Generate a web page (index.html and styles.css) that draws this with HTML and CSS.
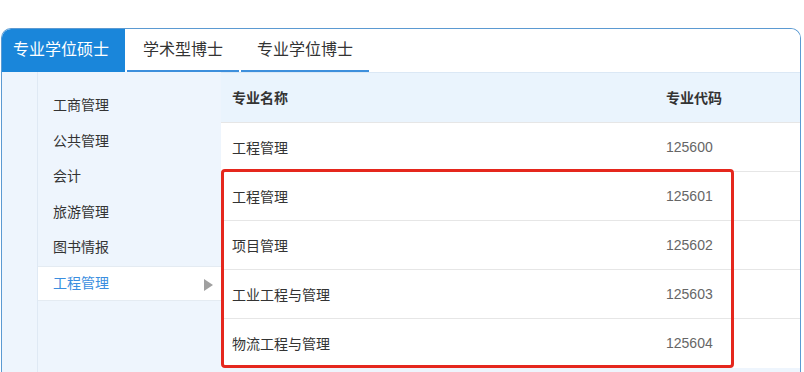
FILE: index.html
```html
<!DOCTYPE html>
<html lang="zh-CN">
<head>
  <meta charset="UTF-8">
  <title>专业目录</title>
  <link rel="stylesheet" href="styles.css">
</head>
<body>
  <div class="panel">
    <div class="tabs">
      <div class="tab active">专业学位硕士</div>
      <div class="tab">学术型博士</div>
      <div class="tab">专业学位博士</div>
    </div>
    <div class="panel-body">
      <div class="strip"></div>
      <ul class="menu">
        <li>工商管理</li>
        <li>公共管理</li>
        <li>会计</li>
        <li>旅游管理</li>
        <li>图书情报</li>
        <li class="current">工程管理<span class="arrow"></span></li>
      </ul>
      <div class="table-wrap">
        <table class="majors">
          <thead>
            <tr><th>专业名称</th><th class="code">专业代码</th></tr>
          </thead>
          <tbody>
            <tr><td>工程管理</td><td class="code">125600</td></tr>
            <tr><td>工程管理</td><td class="code">125601</td></tr>
            <tr><td>项目管理</td><td class="code">125602</td></tr>
            <tr><td>工业工程与管理</td><td class="code">125603</td></tr>
            <tr><td>物流工程与管理</td><td class="code">125604</td></tr>
          </tbody>
        </table>
        <!-- annotation box over the sub-majors -->
        <div class="highlight"></div>
      </div>
    </div>
  </div>
</body>
</html>
```

FILE: styles.css
```css
* {
  box-sizing: border-box;
  margin: 0;
  padding: 0;
}
body {
  font-family: "Liberation Sans", "Noto Sans CJK SC", sans-serif;
  background: #fff;
  color: #333;
  font-size: 14px;
}
.panel {
  margin: 28px 0 0 1px;
  width: 800px;
  height: 360px;
  border: 1px solid #5b9ad2;
  border-bottom: none;
  border-radius: 10px 10px 0 0;
  overflow: hidden;
}
.tabs {
  display: flex;
  gap: 2px;
  height: 43px;
  background: #fff;
}
.tab {
  padding: 0 16px;
  font-size: 16px;
  line-height: 41px;
  color: #333;
  border-bottom: 2px solid #3d8fdc;
}
.tab.active {
  padding: 0 16px 0 11px;
  background: #1a86da;
  color: #fff;
  border-bottom-color: #1a86da;
}
.panel-body {
  display: flex;
  height: 320px;
  background: #eef5fd;
}
.strip {
  width: 36px;
  border-right: 1px solid #dfe9f4;
}
.menu {
  list-style: none;
  width: 183px;
  padding-top: 16px;
}
.menu li {
  position: relative;
  height: 35.5px;
  line-height: 35.5px;
  padding-left: 15px;
}
.menu li.current {
  background: #fff;
  color: #3a8ee0;
  border-top: 1px solid #e4ebf2;
  border-bottom: 1px solid #e4ebf2;
  line-height: 33.5px;
}
.arrow {
  position: absolute;
  right: 8px;
  top: 12px;
  border-left: 9px solid #a0a0a0;
  border-top: 6px solid transparent;
  border-bottom: 6px solid transparent;
}
.table-wrap {
  position: relative;
  flex: 1;
}
.majors {
  width: 100%;
  border-collapse: collapse;
}
.majors th {
  height: 50px;
  padding: 0 11px 2px;
  text-align: left;
  font-weight: bold;
  background: #eaf4fd;
  border-top: 1px solid #dbe8f5;
  color: #333;
}
.majors td {
  height: 49px;
  padding: 0 11px 1px;
  background: #fff;
  border-top: 1px solid #e6e6e6;
}
.majors .code {
  width: 145px;
}
.majors td.code {
  color: #666;
}
.highlight {
  position: absolute;
  left: 0;
  top: 97px;
  width: 513px;
  height: 199px;
  border: 3px solid #e5271d;
  border-radius: 4px;
}
```
